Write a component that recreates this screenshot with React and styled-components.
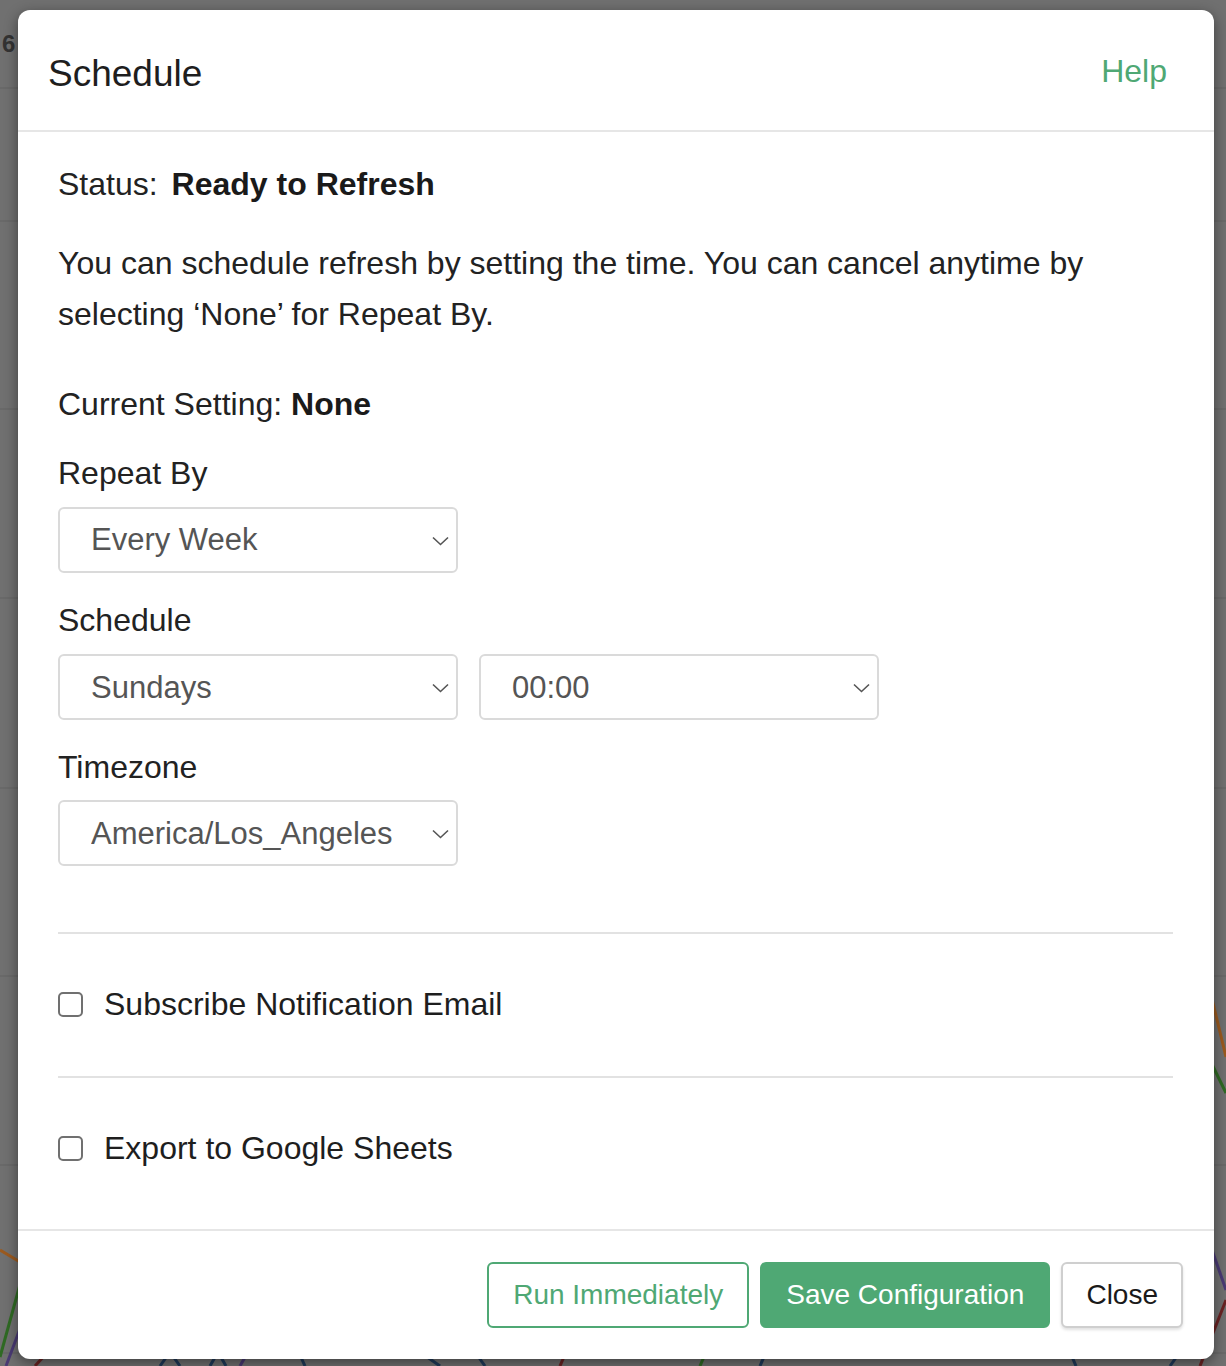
import React, { useState } from 'react';
import styled, { createGlobalStyle } from 'styled-components';

const GlobalStyle = createGlobalStyle`
	html, body {
		margin: 0;
		padding: 0;
		background: #707070;
		font-family: 'Liberation Sans', Arial, Helvetica, sans-serif;
	}
	* {
		box-sizing: border-box;
	}
`;

const Backdrop = styled.div`
	position: fixed;
	inset: 0;
	background-color: #707070;
	overflow: hidden;
	padding: 10px 12px 0 18px;
`;

const ChartBehind = styled.svg`
	position: absolute;
	left: 0;
	top: 0;
	width: 1226px;
	height: 1366px;
	z-index: 0;
`;

const PageDigit = styled.span`
	position: absolute;
	left: 2px;
	top: 30px;
	font-size: 24px;
	font-weight: 700;
	color: #333;
	z-index: 0;
`;

const Modal = styled.div`
	position: relative;
	z-index: 1;
	width: 1196px;
	background-color: #fff;
	border-radius: 12px;
	box-shadow: 0 4px 14px rgba(0, 0, 0, 0.45);
	display: flex;
	flex-direction: column;
	color: #222;
`;

const Header = styled.div`
	display: flex;
	align-items: center;
	justify-content: space-between;
	height: 122px;
	padding: 8px 47px 0 30px;
	border-bottom: 2px solid #e6e6e6;
`;

const Title = styled.h4`
	margin: 0;
	font-size: 37px;
	font-weight: 400;
	color: #1e1e1e;
`;

const HelpLink = styled.a`
	font-size: 32px;
	color: #4fa874;
	text-decoration: none;
	margin-bottom: 6px;
	cursor: pointer;
`;

const Body = styled.div`
	padding: 27px 41px 55px 40px;
	font-size: 32px;
	line-height: 1.6;
	display: flex;
	flex-direction: column;
`;

const Line = styled.div`
	margin-top: ${(p) => p.$gap || 0}px;
	display: flex;
	align-items: baseline;
`;

const Paragraph = styled.p`
	margin: 28px 0 0;
`;

const Key = styled.span`
	margin-right: ${(p) => p.$space || 9}px;
`;

const Strong = styled.strong`
	font-weight: 700;
	color: #1a1a1a;
`;

const FieldLabel = styled.label`
	display: block;
	margin-top: ${(p) => p.$gap}px;
`;

const SelectRow = styled.div`
	display: flex;
	gap: 21px;
	margin-top: ${(p) => p.$gap || 8}px;
`;

const SelectWrap = styled.div`
	position: relative;
	width: 400px;
	height: 66px;
	& svg {
		position: absolute;
		right: 9px;
		top: 29px;
		pointer-events: none;
	}
`;

const NativeSelect = styled.select`
	appearance: none;
	-webkit-appearance: none;
	width: 100%;
	height: 100%;
	border: 2px solid #dadada;
	border-radius: 6px;
	background: #fff;
	padding: 0 40px 0 31px;
	font-family: inherit;
	font-size: 31px;
	color: #555;
	outline: none;
`;

const Divider = styled.hr`
	margin: ${(p) => p.$top}px 0 0;
	border: 0;
	border-top: 2px solid #e2e2e2;
`;

const CheckRow = styled.label`
	display: flex;
	align-items: center;
	gap: 21px;
	margin-top: 45px;
	margin-bottom: ${(p) => p.$bottom || 0}px;
	cursor: pointer;
	color: #1e1e1e;
`;

const Box = styled.span`
	width: 25px;
	height: 25px;
	border: 2px solid #707070;
	border-radius: 5px;
	background: #fff;
	flex-shrink: 0;
	display: flex;
	align-items: center;
	justify-content: center;
	& input {
		display: none;
	}
`;

const Footer = styled.div`
	display: flex;
	justify-content: flex-end;
	align-items: center;
	gap: 11px;
	height: 130px;
	padding: 0 31px 0 0;
	border-top: 2px solid #e6e6e6;
`;

const Button = styled.button`
	height: 66px;
	padding: 0 ${(p) => p.$pad || 24}px;
	font-family: inherit;
	font-size: 28px;
	border-radius: 6px;
	cursor: pointer;
	border: 2px solid ${(p) => (p.$variant === 'default' ? '#cfcfcf' : '#4fa874')};
	background-color: ${(p) => (p.$variant === 'primary' ? '#4fa874' : '#fff')};
	color: ${(p) => (p.$variant === 'primary' ? '#fff' : p.$variant === 'outline' ? '#4fa874' : '#1a1a1a')};
	box-shadow: ${(p) => (p.$variant === 'default' ? '0 2px 3px rgba(0,0,0,0.12)' : 'none')};
`;

const Chevron = () => (
	<svg width='17' height='10' viewBox='0 0 17 10'>
		<polyline points='1,1.5 8.5,8.5 16,1.5' fill='none' stroke='#555' strokeWidth='1.6' />
	</svg>
);

function Dropdown({ value, options, onChange }) {
	return (
		<SelectWrap>
			<NativeSelect value={value} onChange={(e) => onChange(e.target.value)}>
				{options.map((o) => (
					<option key={o} value={o}>
						{o}
					</option>
				))}
			</NativeSelect>
			<Chevron />
		</SelectWrap>
	);
}

function Check({ label, bottom }) {
	const [on, setOn] = useState(false);
	return (
		<CheckRow $bottom={bottom}>
			<Box>
				<input type='checkbox' checked={on} onChange={() => setOn(!on)} />
				{on && (
					<svg width='16' height='16' viewBox='0 0 16 16'>
						<polyline points='2,8 6,12 14,3' fill='none' stroke='#4fa874' strokeWidth='2.4' />
					</svg>
				)}
			</Box>
			{label}
		</CheckRow>
	);
}

const hours = Array.from({ length: 24 }, (_, i) => `${String(i).padStart(2, '0')}:00`);

export default function App() {
	const [repeat, setRepeat] = useState('Every Week');
	const [day, setDay] = useState('Sundays');
	const [time, setTime] = useState('00:00');
	const [tz, setTz] = useState('America/Los_Angeles');

	return (
		<>
			<GlobalStyle />
			<Backdrop>
				<ChartBehind viewBox='0 0 1226 1366'>
					{[88, 221, 409, 598, 788, 976, 1165, 1353].map((y) => (
						<line key={y} x1='0' x2='1226' y1={y} y2={y} stroke='#676767' strokeWidth='1.5' />
					))}
					<polyline points='0,1250 30,1268' stroke='#9b5a1f' strokeWidth='3' fill='none' />
					<polyline points='0,1357 24,1270' stroke='#2f6a23' strokeWidth='3' fill='none' />
					<polyline points='6,1366 24,1318' stroke='#4a3a74' strokeWidth='3' fill='none' />
					<polyline points='1205,970 1226,1057' stroke='#9b5a1f' strokeWidth='3' fill='none' />
					<polyline points='1205,1050 1226,1093' stroke='#2f6a23' strokeWidth='3' fill='none' />
					<polyline points='1205,1230 1226,1290' stroke='#4a3a74' strokeWidth='3' fill='none' />
					<polyline points='1200,1366 1226,1300' stroke='#6a2323' strokeWidth='3' fill='none' />
					<polyline points='35,1366 45,1355' stroke='#6a2323' strokeWidth='3' fill='none' />
					<polyline points='160,1366 170,1352 180,1366' stroke='#1f3a5a' strokeWidth='3' fill='none' />
					<polyline points='210,1366 218,1352 226,1366' stroke='#1f3a5a' strokeWidth='3' fill='none' />
					<polyline points='300,1355 305,1366' stroke='#1f3a5a' strokeWidth='3' fill='none' />
					<polyline points='240,1366 248,1352' stroke='#4a3a74' strokeWidth='3' fill='none' />
					<polyline points='420,1352 440,1366' stroke='#1f3a5a' strokeWidth='3' fill='none' />
					<polyline points='475,1352 485,1366' stroke='#1f3a5a' strokeWidth='3' fill='none' />
					<polyline points='560,1366 566,1352' stroke='#6a2323' strokeWidth='3' fill='none' />
					<polyline points='700,1366 706,1352' stroke='#2f6a23' strokeWidth='3' fill='none' />
					<polyline points='760,1366 766,1352' stroke='#1f3a5a' strokeWidth='3' fill='none' />
					<polyline points='1070,1352 1076,1366' stroke='#1f3a5a' strokeWidth='3' fill='none' />
					<polyline points='1170,1366 1180,1352' stroke='#1f3a5a' strokeWidth='3' fill='none' />
				</ChartBehind>
				<PageDigit>6</PageDigit>
				<Modal role='dialog'>
					<Header>
						<Title>Schedule</Title>
						<HelpLink>Help</HelpLink>
					</Header>
					<Body>
						<Line>
							<Key $space={14}>Status:</Key>
							<Strong>Ready to Refresh</Strong>
						</Line>
						<Paragraph>
							You can schedule refresh by setting the time. You can cancel anytime by selecting ‘None’ for Repeat By.
						</Paragraph>
						<Line $gap={38}>
							<Key>Current Setting:</Key>
							<Strong>None</Strong>
						</Line>
						<FieldLabel $gap={18}>Repeat By</FieldLabel>
						<SelectRow>
							<Dropdown
								value={repeat}
								onChange={setRepeat}
								options={['None', 'Every Hour', 'Every Day', 'Every Week', 'Every Month']}
							/>
						</SelectRow>
						<FieldLabel $gap={22}>Schedule</FieldLabel>
						<SelectRow>
							<Dropdown
								value={day}
								onChange={setDay}
								options={['Sundays', 'Mondays', 'Tuesdays', 'Wednesdays', 'Thursdays', 'Fridays', 'Saturdays']}
							/>
							<Dropdown value={time} onChange={setTime} options={hours} />
						</SelectRow>
						<FieldLabel $gap={22}>Timezone</FieldLabel>
						<SelectRow $gap={7}>
							<Dropdown
								value={tz}
								onChange={setTz}
								options={['America/Los_Angeles', 'America/New_York', 'Europe/London', 'Asia/Tokyo', 'UTC']}
							/>
						</SelectRow>
						<Divider $top={66} />
						<Check label='Subscribe Notification Email' bottom={45} />
						<Divider $top={0} />
						<Check label='Export to Google Sheets' />
					</Body>
					<Footer>
						<Button $variant='outline'>Run Immediately</Button>
						<Button $variant='primary'>Save Configuration</Button>
						<Button $variant='default' $pad={23}>Close</Button>
					</Footer>
				</Modal>
			</Backdrop>
		</>
	);
}
